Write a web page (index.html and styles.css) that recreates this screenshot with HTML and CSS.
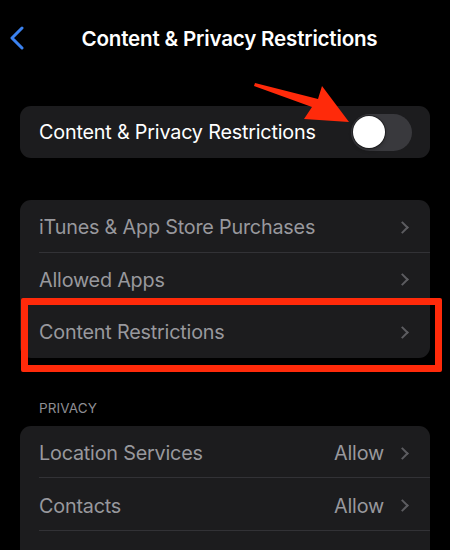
FILE: index.html
```html
<!DOCTYPE html>
<html>
<head>
<meta charset="utf-8">
<link rel="stylesheet" href="styles.css">
</head>
<body>
<div class="screen">
  <header class="nav">
    <svg class="back" width="16" height="24" viewBox="0 0 16 24"><path d="M13 2 L3 12 L13 22" fill="none" stroke="#3b82f0" stroke-width="3" stroke-linecap="round" stroke-linejoin="round"/></svg>
    <h1 class="title">Content &amp; Privacy Restrictions</h1>
    <span></span>
  </header>

  <section class="card card-top">
    <div class="row">
      <span class="label bright">Content &amp; Privacy Restrictions</span>
      <span class="toggle"><span class="knob"></span></span>
    </div>
  </section>

  <section class="card card-mid">
    <div class="row sep"><span class="label">iTunes &amp; App Store Purchases</span><span class="chev"></span></div>
    <div class="row sep"><span class="label">Allowed Apps</span><span class="chev"></span></div>
    <div class="row"><span class="label">Content Restrictions</span><span class="chev"></span></div>
    <div class="highlight"></div>
  </section>

  <div class="section-title">PRIVACY</div>
  <section class="card card-priv">
    <div class="row sep"><span class="label">Location Services</span><span class="value">Allow</span><span class="chev"></span></div>
    <div class="row sep"><span class="label">Contacts</span><span class="value">Allow</span><span class="chev"></span></div>
    <div class="row"><span class="label">Calendars</span><span class="value">Allow</span><span class="chev"></span></div>
  </section>

  <svg class="arrow" width="120" height="60" viewBox="0 0 120 60"><polygon points="5,8 68,24 72,11 99,47 54,44 62,32 4,11" fill="#ff2a0a"/></svg>
</div>
</body>
</html>
```

FILE: styles.css
```css
* { box-sizing: border-box; }
html, body { margin: 0; padding: 0; background: #000; }
body { font-family: Inter, "Noto Sans", sans-serif; color: #fff; }
.screen { position: relative; width: 450px; height: 550px; overflow: hidden; }

.nav {
  height: 76px;
  display: grid;
  grid-template-columns: 1fr auto 1fr;
  align-items: center;
  padding-left: 9px;
}
.back { display: block; }
.title {
  margin: 0;
  font-size: 20.6px;
  font-weight: 600;
  letter-spacing: -0.2px;
  color: #fff;
}

.card {
  position: relative;
  margin: 0 20px;
  background: #1c1c1e;
  border-radius: 11px;
}
.card-top { margin-top: 30px; }
.card-mid { margin-top: 42px; }
.card-priv { margin-top: 0; }

.row {
  position: relative;
  height: 52.6px;
  display: flex;
  align-items: center;
  padding-left: 19px;
  padding-right: 20px;
  padding-top: 2px;
}
.card-top .row { height: 52px; padding-right: 18px; padding-top: 0; }
.row.sep::after {
  content: "";
  position: absolute;
  left: 19px; right: 0; bottom: 0;
  height: 1px;
  background: #323236;
}
.label {
  flex: 1;
  font-size: 19.8px;
  letter-spacing: -0.2px;
  color: #98989d;
}
.label.bright { color: #fff; }
.value {
  font-size: 19.8px;
  letter-spacing: -0.2px;
  color: #98989d;
  margin-right: 14px;
}
.chev {
  width: 9px; height: 9px;
  border-top: 2.3px solid #5c5c60;
  border-right: 2.3px solid #5c5c60;
  transform: rotate(45deg);
  margin-right: 3px;
}

.toggle {
  position: relative;
  width: 61px; height: 37px;
  border-radius: 19px;
  background: #39393d;
}
.knob {
  position: absolute;
  left: 2px; top: 2.5px;
  width: 32px; height: 32px;
  border-radius: 50%;
  background: #fff;
  box-shadow: 0 0 0 1px rgba(0,0,0,0.35), 0 2px 4px rgba(0,0,0,0.3);
}

.highlight {
  position: absolute;
  left: 1px; top: 98px;
  width: 421px; height: 74px;
  border: 7px solid #ff2a0a;
  border-radius: 2px;
}

.section-title {
  margin: 0 0 0 39px;
  padding-top: 42px;
  height: 68px;
  font-size: 13.5px;
  color: #8e8e93;
  letter-spacing: 0.1px;
}

.arrow {
  position: absolute;
  left: 250px; top: 75px;
}
```
